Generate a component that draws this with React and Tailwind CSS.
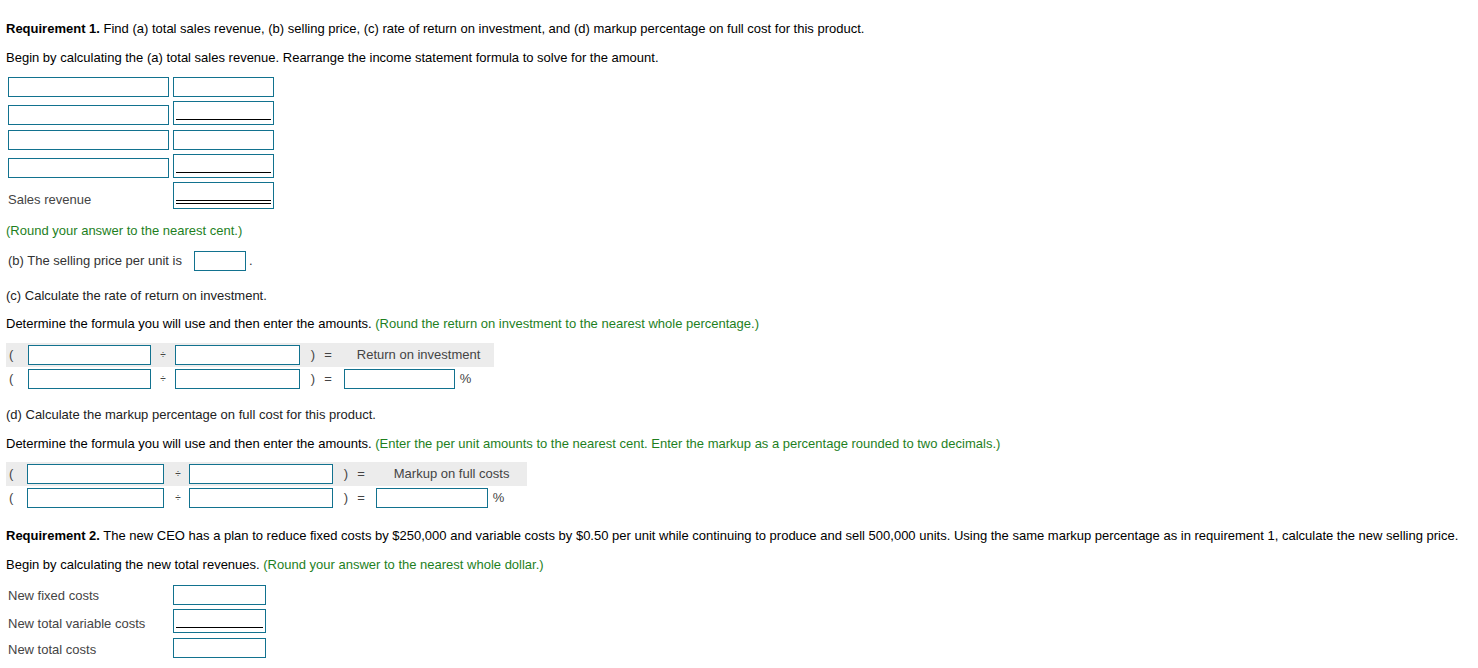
import React from "react";

const font = { fontFamily: '"Liberation Sans", Arial, sans-serif' };

// plain answer box
function Box({ className = "" }) {
    return <div className={"border border-[#12728f] bg-white shrink-0 " + className} />;
}

// box with a total line (single or double)
function TotalBox({ className = "", lines = 1 }) {
    return (
        <div className={"border border-[#12728f] bg-white shrink-0 flex flex-col justify-end px-[2px] pb-[4px] " + className}>
            <div className="h-px bg-black" />
            {lines === 2 && <div className="h-px bg-black mt-[2px]" />}
        </div>
    );
}

function Hint({ children }) {
    return <span className="text-[#1e7f1e]">{children}</span>;
}

export default function App() {
    return (
        <div style={font} className="bg-white w-[1478px] h-[668px] overflow-hidden text-[13px] leading-[16px] text-black px-[6px] pt-[21px]">
            <p>
                <b>Requirement 1.</b> Find (a) total sales revenue, (b) selling price, (c) rate of return on investment, and (d) markup percentage on full cost for this product.
            </p>
            <p className="mt-[13px]">
                Begin by calculating the (a) total sales revenue. Rearrange the income statement formula to solve for the amount.
            </p>

            {/* income statement grid */}
            <div className="mt-[11px] ml-[2px] flex flex-col text-[#444]">
                <div className="flex items-end gap-[4px]">
                    <Box className="w-[161px] h-[20px]" />
                    <Box className="w-[101px] h-[20px]" />
                </div>
                <div className="flex items-end gap-[4px] mt-[4px]">
                    <Box className="w-[161px] h-[20px]" />
                    <TotalBox className="w-[101px] h-[24px]" />
                </div>
                <div className="flex items-end gap-[4px] mt-[5px]">
                    <Box className="w-[161px] h-[20px]" />
                    <Box className="w-[101px] h-[20px]" />
                </div>
                <div className="flex items-end gap-[4px] mt-[4px]">
                    <Box className="w-[161px] h-[20px]" />
                    <TotalBox className="w-[101px] h-[24px]" />
                </div>
                <div className="flex items-end gap-[4px] mt-[4px]">
                    <div className="w-[161px] pb-[1px]">Sales revenue</div>
                    <TotalBox className="w-[101px] h-[27px]" lines={2} />
                </div>
            </div>

            <p className="mt-[14px]"><Hint>(Round your answer to the nearest cent.)</Hint></p>

            <div className="mt-[12px] flex items-center text-[#333]">
                <span className="ml-[2px]">(b) The selling price per unit is</span>
                <Box className="w-[52px] h-[20px] ml-[12px]" />
                <span className="ml-[3px]">.</span>
            </div>

            <p className="mt-[17px] text-[#222]">(c) Calculate the rate of return on investment.</p>
            <p className="mt-[12px]">
                Determine the formula you will use and then enter the amounts. <Hint>(Round the return on investment to the nearest whole percentage.)</Hint>
            </p>

            <div className="mt-[11px] text-[#444]">
                <div className="w-[488px] h-[24px] bg-[#ececec] flex items-center pl-[3px]">
                    <span>(</span>
                    <Box className="w-[123px] h-[20px] ml-[15px]" />
                    <span className="ml-[9px] mr-[9px] text-[10px]">÷</span>
                    <Box className="w-[125px] h-[20px]" />
                    <span className="ml-[11px]">)</span>
                    <span className="ml-[9px]">=</span>
                    <span className="ml-[25px]">Return on investment</span>
                </div>
                <div className="h-[24px] flex items-center pl-[3px]">
                    <span>(</span>
                    <Box className="w-[123px] h-[20px] ml-[15px]" />
                    <span className="ml-[9px] mr-[9px] text-[10px]">÷</span>
                    <Box className="w-[125px] h-[20px]" />
                    <span className="ml-[11px]">)</span>
                    <span className="ml-[9px]">=</span>
                    <Box className="w-[111px] h-[20px] ml-[12px]" />
                    <span className="ml-[5px]">%</span>
                </div>
            </div>

            <p className="mt-[16px] text-[#222]">(d) Calculate the markup percentage on full cost for this product.</p>
            <p className="mt-[13px]">
                Determine the formula you will use and then enter the amounts. <Hint>(Enter the per unit amounts to the nearest cent. Enter the markup as a percentage rounded to two decimals.)</Hint>
            </p>

            <div className="mt-[10px] text-[#444]">
                <div className="w-[521px] h-[24px] bg-[#ececec] flex items-center pl-[3px]">
                    <span>(</span>
                    <Box className="w-[137px] h-[20px] ml-[14px]" />
                    <span className="ml-[11px] mr-[8px] text-[10px]">÷</span>
                    <Box className="w-[144px] h-[20px]" />
                    <span className="ml-[11px]">)</span>
                    <span className="ml-[9px]">=</span>
                    <span className="ml-[29px]">Markup on full costs</span>
                </div>
                <div className="h-[24px] flex items-center pl-[3px]">
                    <span>(</span>
                    <Box className="w-[137px] h-[20px] ml-[14px]" />
                    <span className="ml-[11px] mr-[8px] text-[10px]">÷</span>
                    <Box className="w-[144px] h-[20px]" />
                    <span className="ml-[11px]">)</span>
                    <span className="ml-[9px]">=</span>
                    <Box className="w-[112px] h-[20px] ml-[11px]" />
                    <span className="ml-[5px]">%</span>
                </div>
            </div>

            <p className="mt-[18px] whitespace-nowrap">
                <b>Requirement 2.</b> The new CEO has a plan to reduce fixed costs by $250,000 and variable costs by $0.50 per unit while continuing to produce and sell 500,000 units. Using the same markup percentage as in requirement 1, calculate the new selling price.
            </p>
            <p className="mt-[13px]">
                Begin by calculating the new total revenues. <Hint>(Round your answer to the nearest whole dollar.)</Hint>
            </p>

            {/* new costs */}
            <div className="mt-[12px] ml-[2px] flex flex-col text-[#444]">
                <div className="flex items-center">
                    <div className="w-[165px] pt-[2px]">New fixed costs</div>
                    <Box className="w-[93px] h-[20px]" />
                </div>
                <div className="flex items-center mt-[4px]">
                    <div className="w-[165px] pt-[6px]">New total variable costs</div>
                    <TotalBox className="w-[93px] h-[24px]" />
                </div>
                <div className="flex items-center mt-[5px]">
                    <div className="w-[165px] pt-[3px]">New total costs</div>
                    <Box className="w-[93px] h-[20px]" />
                </div>
            </div>
        </div>
    );
}
